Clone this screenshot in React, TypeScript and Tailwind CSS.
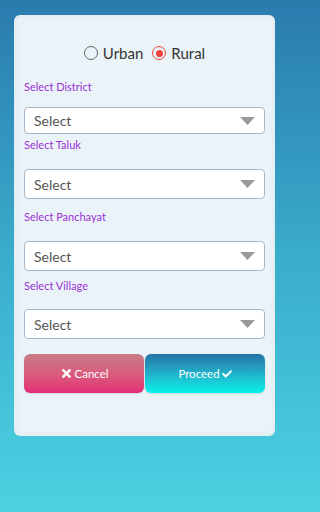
import { FaTimes, FaCheck } from 'react-icons/fa';

const Dropdown = ({ h }: { h: string }) => (
  <div className={`${h} flex items-center justify-between rounded-[4px] border border-[#a7b9c8] bg-white pl-[9px] pr-[9px]`}>
    <span className="text-[14px] text-[#555]">Select</span>
    <svg width="15" height="8" viewBox="0 0 15 8">
      <path d="M0 0 L15 0 L7.5 8 Z" fill="#9a9a9a" />
    </svg>
  </div>
);

const Label = ({ text, mt }: { text: string; mt: string }) => (
  <div className={`${mt} h-[14px] text-[11px] leading-[14px] text-[#9a2fd6]`}>{text}</div>
);

export default function App() {
  return (
    <div
      className="w-full min-h-screen h-[512px] bg-gradient-to-b from-[#2a7bad] via-[#3aaccc] to-[#4bd2e2] pt-[15px] px-[14px]"
      style={{ fontFamily: 'Lato, "Noto Sans", sans-serif' }}
    >
      <div className="w-[261px] rounded-[6px] bg-[#eaf3f8] shadow-[inset_0_0_6px_rgba(0,0,0,0.06)] px-[10px] pt-[28px] pb-[43px] flex flex-col">
        <div className="h-5 flex items-center justify-center gap-[5px] text-[15px] text-[#333]">
          <span className="w-[14px] h-[14px] rounded-full border-[1.5px] border-[#666]" />
          <span className="mr-[4px]">Urban</span>
          <span className="w-[14px] h-[14px] rounded-full border-[1.5px] border-[#f2463d] flex items-center justify-center">
            <span className="w-[7px] h-[7px] rounded-full bg-[#f2463d]" />
          </span>
          <span>Rural</span>
        </div>

        <Label text="Select District" mt="mt-[17px]" />
        <div className="mt-[13px]">
          <Dropdown h="h-[27px]" />
        </div>

        <Label text="Select Taluk" mt="mt-[4px]" />
        <div className="mt-[17px]">
          <Dropdown h="h-[30px]" />
        </div>

        <Label text="Select Panchayat" mt="mt-[11px]" />
        <div className="mt-[17px]">
          <Dropdown h="h-[30px]" />
        </div>

        <Label text="Select Village" mt="mt-[8px]" />
        <div className="mt-[16px]">
          <Dropdown h="h-[30px]" />
        </div>

        <div className="mt-[15px] flex h-[39px] gap-[1px]">
          <button className="flex-1 rounded-[6px] bg-gradient-to-b from-[#c87c86] to-[#e42b76] text-white text-[11.5px] flex items-center justify-center gap-[2px] shadow-[0_1px_2px_rgba(0,0,0,0.12)]">
            <FaTimes size={13} />
            Cancel
          </button>
          <button className="flex-1 rounded-[6px] bg-gradient-to-b from-[#2673a7] to-[#00f2ea] text-white text-[11.5px] flex items-center justify-center gap-[2px] shadow-[0_1px_2px_rgba(0,0,0,0.12)]">
            Proceed
            <FaCheck size={10} />
          </button>
        </div>
      </div>
    </div>
  );
}
